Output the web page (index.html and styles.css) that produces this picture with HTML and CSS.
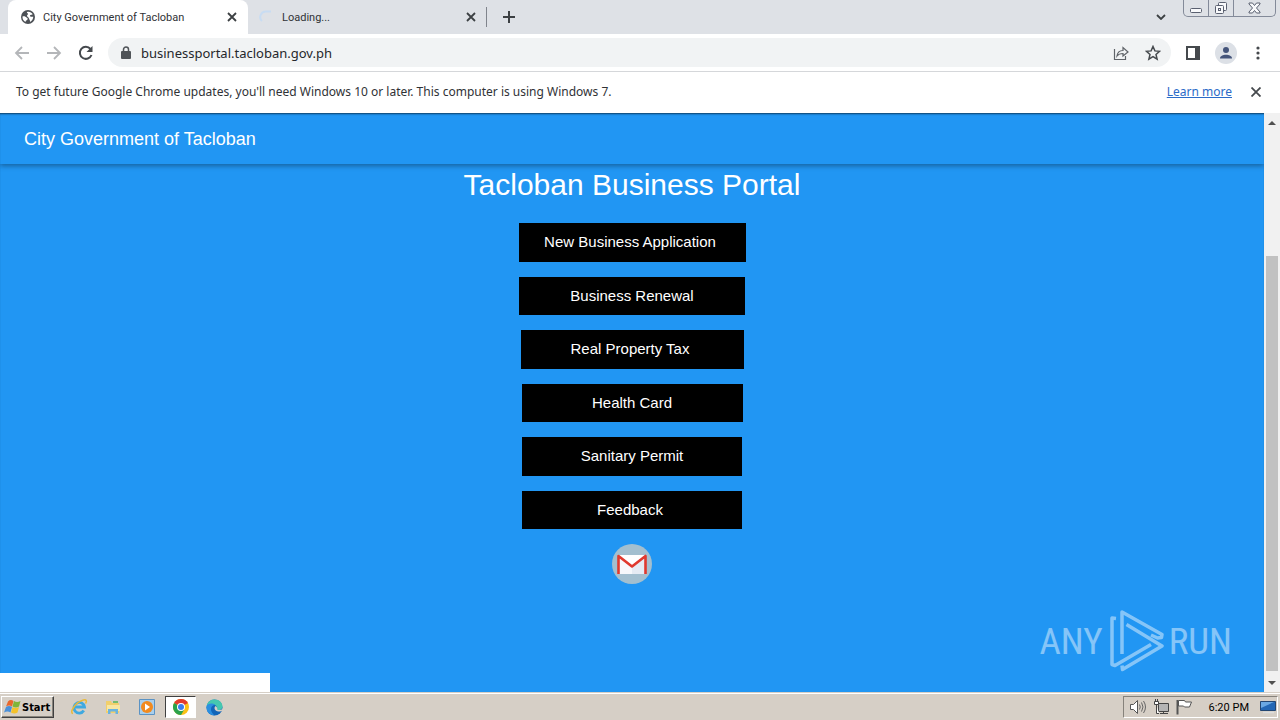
FILE: index.html
```html
<!DOCTYPE html>
<html lang="en">
<head>
<meta charset="utf-8">
<title>City Government of Tacloban</title>
<link rel="stylesheet" href="styles.css">
</head>
<body>
<div class="desktop">
  <header class="tabstrip">
    <div class="tab tab-active">
      <svg class="tab-icon" viewBox="0 0 16 16"><circle cx="8" cy="8" r="7" fill="#4d5156"/><path d="M2.500 7.500c2.500-.5 3 .5 4 1s1.500 1 1 2-2 .5-2 2.500C3.500 12 2.300 10 2.500 7.500zM7 3c2-.8 4.500 0 5.700 2.200-1 .8-2.200.3-2.700 1.300s1 1.500 3.300 1.300C13 10.500 12 12 10 13c.3-2-.8-2.200-1-3.500S7.500 8 7 7s1.500-1.500 1-2.300S6.500 4 7 3z" fill="#fff"/></svg>
      <span class="tab-title">City Government of Tacloban</span>
      <button class="icon-btn tab-close" aria-label="Close tab"><svg width="10" height="10" viewBox="0 0 10 10"><path d="M1 1l8 8M9 1l-8 8" stroke="#3c4043" stroke-width="1.800"/></svg></button>
    </div>
    <div class="tab tab-idle">
      <svg class="tab-icon" viewBox="0 0 16 16"><path d="M13 2.500H8A5.500 5.500 0 0 0 4 12" fill="none" stroke="#c8dcf2" stroke-width="2"/></svg>
      <span class="tab-title">Loading...</span>
      <button class="icon-btn tab-close" aria-label="Close tab"><svg width="10" height="10" viewBox="0 0 10 10"><path d="M1 1l8 8M9 1l-8 8" stroke="#3c4043" stroke-width="1.800"/></svg></button>
    </div>
    <span class="tab-divider"></span>
    <button class="icon-btn new-tab" aria-label="New tab"><svg width="12" height="12" viewBox="0 0 12 12"><path d="M6 0v12M0 6h12" stroke="#3c4043" stroke-width="2"/></svg></button>
    <button class="icon-btn tab-search" aria-label="Search tabs"><svg width="10" height="6" viewBox="0 0 10 6"><path d="M1 1l4 4 4-4" fill="none" stroke="#3c4043" stroke-width="1.800"/></svg></button>
    <div class="window-controls">
      <button class="icon-btn win-min" aria-label="Minimize"><svg width="12" height="5" viewBox="0 0 12 5"><rect x=".5" y=".5" width="11" height="4" rx="1" fill="#f8f9fb" stroke="#5a6070"/></svg></button>
      <button class="icon-btn win-restore" aria-label="Restore"><svg width="14" height="14" viewBox="0 0 14 14"><g fill="#f8f9fb" stroke="#5a6070"><rect x="4.500" y="1.500" width="8" height="8" rx="1"/><rect x="1.500" y="4.500" width="8" height="8" rx="1"/><rect x="4.500" y="7.500" width="2" height="2"/></g></svg></button>
      <button class="icon-btn win-close" aria-label="Close"><svg width="13" height="12" viewBox="0 0 13 12"><path d="M1 1h3.500l2 2.500L8.500 1H12v1L8.500 6l3.500 4v1H8.500l-2-2.500-2 2.500H1v-1l3.500-4L1 2z" fill="#f8f9fb" stroke="#5a6070"/></svg></button>
    </div>
  </header>

  <nav class="toolbar">
    <button class="icon-btn" aria-label="Back"><svg width="16" height="16" viewBox="0 0 16 16"><path d="M15 8H2M8 2L2 8l6 6" fill="none" stroke="#b4b6b9" stroke-width="1.800"/></svg></button>
    <button class="icon-btn" aria-label="Forward"><svg width="16" height="16" viewBox="0 0 16 16"><path d="M1 8h13M8 2l6 6-6 6" fill="none" stroke="#b4b6b9" stroke-width="1.800"/></svg></button>
    <button class="icon-btn" aria-label="Reload"><svg width="16" height="16" viewBox="0 0 16 16"><path d="M13.500 10A6 6 0 1 1 12.500 4" fill="none" stroke="#45494d" stroke-width="2"/><path d="M14.500 1v6h-6z" fill="#45494d"/></svg></button>
    <div class="omnibox">
      <svg width="10" height="14" viewBox="0 0 10 14"><rect x="0" y="5" width="10" height="8" rx="1" fill="#505458"/><path d="M2.500 6V3.500a2.500 2.500 0 0 1 5 0V6" fill="none" stroke="#505458" stroke-width="1.500"/></svg>
      <input class="url" type="text" aria-label="Address" value="businessportal.tacloban.gov.ph">
      <button class="icon-btn" aria-label="Share"><svg width="16" height="16" viewBox="0 0 16 16"><path d="M1.500 4v10.500h11V11M4 11c.5-4 2.500-5.500 6-5.500V2.500L15 7l-5 4V8.500c-2.500 0-4.500.5-6 2.500z" fill="none" stroke="#5f6368" stroke-width="1.200"/></svg></button>
      <button class="icon-btn" aria-label="Bookmark"><svg width="16" height="16" viewBox="0 0 16 16"><path d="M8 1.500l1.900 4.400 4.700.4-3.600 3.100 1.100 4.700L8 11.600l-4.100 2.500L5 9.400 1.400 6.300l4.700-.4z" fill="none" stroke="#45494d" stroke-width="1.500"/></svg></button>
    </div>
    <button class="icon-btn" aria-label="Side panel"><svg width="14" height="14" viewBox="0 0 14 14"><path d="M1 1h12v12H1z" fill="none" stroke="#45494d" stroke-width="2"/><path d="M9 1h4v12H9z" fill="#45494d"/></svg></button>
    <button class="icon-btn" aria-label="Profile"><svg width="22" height="22" viewBox="0 0 22 22"><circle cx="11" cy="11" r="11" fill="#dce0e6"/><circle cx="11" cy="8" r="3" fill="#44547a"/><path d="M5 16.500c0-5 12-5 12 0z" fill="#44547a"/></svg></button>
    <button class="icon-btn menu" aria-label="Menu"><svg width="4" height="14" viewBox="0 0 4 14"><g fill="#45494d"><circle cx="2" cy="2" r="1.600"/><circle cx="2" cy="7" r="1.600"/><circle cx="2" cy="12" r="1.600"/></g></svg></button>
  </nav>

  <div class="infobar">
    <span class="infobar-text">To get future Google Chrome updates, you'll need Windows 10 or later. This computer is using Windows 7.</span>
    <a class="infobar-link" href="#">Learn more</a>
    <button class="icon-btn" aria-label="Dismiss"><svg width="10" height="10" viewBox="0 0 10 10"><path d="M.5.5l9 9M9.500.5l-9 9" stroke="#45494d" stroke-width="1.800"/></svg></button>
  </div>

  <div class="viewport">
    <main class="page">
      <div class="appbar"><span>City Government of Tacloban</span></div>
      <h1 class="title">Tacloban Business Portal</h1>
      <div class="actions">
        <button class="action action-new">New Business Application</button>
        <button class="action action-renewal">Business Renewal</button>
        <button class="action action-tax">Real Property Tax</button>
        <button class="action action-health">Health Card</button>
        <button class="action action-permit">Sanitary Permit</button>
        <button class="action action-feedback">Feedback</button>
      </div>
      <a class="gmail" href="#" aria-label="Gmail"><svg width="40" height="40" viewBox="0 0 40 40"><circle cx="20" cy="20" r="20" fill="#a3bfcf"/><path d="M6 11h28v19H6z" fill="#f7f8fb"/><path d="M20 22l14-11v19H20z" fill="#e6ebf3"/><path d="M6 11l14 11 14-11z" fill="#fff"/><path d="M6.500 30V12L20 22.500 33.500 12v18" fill="none" stroke="#e0392e" stroke-width="2.600" stroke-linejoin="round"/></svg></a>
      <div class="status-bubble"></div>
      <div class="watermark">
        <span>ANY</span>
        <svg width="56" height="62" viewBox="0 0 56 62"><path d="M8 8.500L4 8v46.500l3 1L43 34.500M14 44V2l40 22.500-.5 3-4 .5L43 25M18.500 14.500L54 36 14.500 59.500 14 55.500" fill="none" stroke="#fff" stroke-width="3.500" stroke-linejoin="round"/></svg>
        <span>RUN</span>
      </div>
    </main>
    <div class="scrollbar">
      <svg width="8" height="4" viewBox="0 0 8 4"><path d="M4 0l4 4H0z" fill="#505050"/></svg>
      <div class="thumb"></div>
      <svg width="8" height="4" viewBox="0 0 8 4"><path d="M4 4l4-4H0z" fill="#505050"/></svg>
    </div>
  </div>

  <footer class="taskbar">
    <button class="start"><svg width="17" height="16" viewBox="0 0 17 16"><path d="M4 2.500q2.500-2.500 5.500-.5L8 7.500q-3-2-6 0z" fill="#e8672c"/><path d="M10 2q3 2 6.500 0L15 7.500q-3 2-6.500 0z" fill="#7fb539"/><path d="M2 8q3-2 6 0l-1.500 5.500q-3-2-6.500 0z" fill="#4a90d9"/><path d="M8.500 8q3 2 6.500 0l-1.500 5.500q-3 2-6.500 0z" fill="#f4c22b"/></svg>Start</button>
    <div class="quick">
      <button class="icon-btn task" aria-label="Internet Explorer"><svg width="18" height="18" viewBox="0 0 18 18"><path d="M13.800 12.500a5.300 5.300 0 1 1 .7-3.500H5" fill="none" stroke="#3fa9e0" stroke-width="2.800"/><path d="M3 15.500C-1 15 5 5 12 2.500c5-2 5 1 3.500 3" fill="none" stroke="#e9b93a" stroke-width="1.500"/></svg></button>
      <button class="icon-btn task" aria-label="Explorer"><svg width="18" height="18" viewBox="0 0 18 18"><path d="M2 3h5l1 2h7v10H2z" fill="#f1cf6b"/><path d="M3 7h13v6H3z" fill="#f8e6a2"/><path d="M4 16v-5h10v5h-2.500v-2.500h-5V16z" fill="#6ab3df"/><path d="M9 3h5v2H9z" fill="#76bb70"/></svg></button>
      <button class="icon-btn task" aria-label="Media Player"><svg width="16" height="16" viewBox="0 0 16 16"><path d="M.5.5h15v15H.5z" fill="#a9cfec" stroke="#5b93c4"/><circle cx="8" cy="8" r="6" fill="#f28a1e"/><path d="M6 4.500l5 3.500-5 3.500z" fill="#fff"/></svg></button>
      <button class="icon-btn task task-active" aria-label="Chrome"><svg width="16" height="16" viewBox="0 0 16 16"><circle cx="8" cy="8" r="8" fill="#fbc116"/><path d="M8 8L1.070 4A8 8 0 0 1 14.930 4z" fill="#e33b2e"/><path d="M8 8L1.070 4A8 8 0 0 0 8 16l3-5z" fill="#2ba24c"/><circle cx="8" cy="8" r="4" fill="#fff"/><circle cx="8" cy="8" r="3" fill="#3b7ded"/></svg></button>
      <button class="icon-btn task" aria-label="Edge"><svg width="17" height="17" viewBox="0 0 17 17"><circle cx="8.500" cy="8.500" r="8" fill="#1265b8"/><path d="M.6 7C2 2 5 .5 8.500.5c5 0 8 3.500 8 7 0 3-3 4-5.500 3.500C12 8 10 5.500 7 5.500S1.500 6 .6 7z" fill="#45c8b0"/><path d="M.6 7C2.500 4 7 4 9 6c-3 0-5 3-3.500 6.500S9 16.300 9 16.500C3 16.500-.3 12 .6 7z" fill="#2b8fe0"/><path d="M9.500 7c-2 1.500-1 5 3 5.500 1.500.2 3-.3 3.500-.8l.8.500V10c-2 1.200-4 1.200-5.500.7.500-1.200-.3-3-1.800-3.700z" fill="#d6cfc6"/></svg></button>
    </div>
    <div class="tray">
      <svg width="18" height="16" viewBox="0 0 18 16"><path d="M1.500 5.500h3l4-4v13l-4-4h-3z" fill="#fff" stroke="#555"/><path d="M10.500 5.500q1.500 2.500 0 5M12.500 3.500q3 4.500 0 9M14.500 2q4 6 0 12" fill="none" stroke="#666"/></svg>
      <svg width="17" height="16" viewBox="0 0 17 16"><path d="M5.500 4.500h10v8h-10z" fill="#b4b4b4" stroke="#444"/><path d="M7 14.500h8M10.500 12v3" stroke="#444"/><path d="M1.500 2.500h4v3h-4zM3.500 6v8.500H6M2.500 0v2M4.500 0v2" fill="#fff" stroke="#444"/></svg>
      <svg width="17" height="16" viewBox="0 0 17 16"><path d="M1.500 1v14.500" stroke="#555" stroke-width="2"/><path d="M2.500 1.500h6l1 1.500h6l-2 5h-5l-1-1h-5z" fill="#fff" stroke="#555"/></svg>
      <time class="clock">6:20 PM</time>
      <svg width="16" height="14" viewBox="0 0 16 14"><path d="M.5 1.500h15v9H.5z" fill="#2367b5" stroke="#234672"/><path d="M1 2h13L1 8z" fill="#6aa8e3"/><path d="M3 12.500h11" stroke="#ddd" stroke-width="1.500"/></svg>
    </div>
  </footer>
</div>
</body>
</html>
```
FILE: styles.css
```css
* { box-sizing: border-box; }
body { margin: 0; font-family: "Noto Sans", "Open Sans", sans-serif; font-size: 12px; color: #303236; }
button { font: inherit; color: inherit; cursor: pointer; }
svg { display: block; flex: none; }
.desktop { display: flex; flex-direction: column; min-height: 100vh; }
.icon-btn { display: flex; align-items: center; justify-content: center; flex: none; padding: 0; border: 0; background: none; }

.tabstrip { display: flex; height: 34px; padding-left: 8px; background: #dee1e6; }
.tab { display: flex; align-items: center; width: 240px; padding: 0 11px 0 12px; }
.tab-active { background: #fff; border-radius: 8px 8px 0 0; }
.tab-icon { width: 16px; height: 16px; }
.tab-title { flex: 1; margin-left: 7px; font-family: Roboto, sans-serif; font-size: 11px; white-space: nowrap; }
.tab-idle { width: 238px; padding: 0 10px; }
.tab-idle .tab-title { margin-left: 8px; }
.tab-close { width: 10px; }
.tab-divider { width: 1px; height: 20px; margin-top: 7px; margin-right: 16px; background: #80848c; }
.tab-search { margin-left: auto; margin-right: 17px; }
.window-controls { display: flex; width: 93px; height: 17px; margin-right: 4px; border: 1px solid #838a99; border-top: 0; border-radius: 0 0 5px 5px; }
.win-min { width: 25px; border-right: 1px solid #838a99; padding-top: 5px; }
.win-restore { width: 25px; border-right: 1px solid #838a99; }
.win-close { flex: 1; }

.toolbar { display: flex; align-items: center; gap: 15px; height: 38px; padding: 0 20px 0 14px; background: #fff; border-bottom: 1px solid #d5d7da; }
.toolbar > .icon-btn:nth-child(-n+3) { margin-right: 1px; }
.omnibox { display: flex; align-items: center; flex: 1; gap: 16px; height: 29px; margin-left: -2px; padding: 0 10px 0 13px; border-radius: 15px; background: #f1f3f4; }
.url { flex: 1; min-width: 0; margin-left: -6px; padding: 0; border: 0; background: none; font: inherit; font-size: 13px; color: #25272b; }
.menu { margin-left: 4px; }

.infobar { display: flex; align-items: center; height: 41px; padding: 0 19px 1px 16px; background: #fff; line-height: 16px; }
.infobar-text { flex: 1; padding-bottom: 1px; }
.infobar-link { margin-right: 19px; padding-bottom: 1px; color: #2b6bc8; }

.viewport { display: flex; flex: 1; }
.page { position: relative; flex: 1; display: flex; flex-direction: column; align-items: center; overflow: hidden; background: #2196f3; font-family: "Liberation Sans", Arial, sans-serif; box-shadow: inset 0 2px 2px -1px rgba(0,0,0,.6); }
.appbar { align-self: stretch; display: flex; align-items: center; height: 51px; padding: 1px 24px 0; color: #fff; font-size: 18px; box-shadow: 0 2px 5px rgba(0,0,0,.35); }
.title { margin: 3px 0 0; line-height: 36px; font-size: 30px; font-weight: 400; color: #fff; }
.actions { display: flex; flex-direction: column; align-items: center; gap: 15px; margin-top: 20px; }
.action { width: 220px; height: 38px; padding: 0 0 2px; border: 0; background: #000; color: #fff; font-size: 15px; }
.action:nth-child(odd) { height: 39px; }
.action-new { width: 227px; padding-right: 4px; }
.action-renewal { width: 226px; }
.action-tax { width: 223px; padding-right: 4px; }
.action-health { width: 221px; }
.action-feedback { padding-right: 4px; }
.gmail { margin-top: 15px; }
.status-bubble { position: absolute; left: 0; bottom: 0; width: 270px; height: 19px; background: #fff; }
.watermark { position: absolute; right: 32px; bottom: 20px; display: flex; align-items: center; gap: 5px; opacity: .45; color: #fff; font-family: "Roboto Condensed", "DejaVu Sans Condensed", sans-serif; font-size: 37px; font-weight: 400; }
.scrollbar { display: flex; flex-direction: column; align-items: center; width: 16px; padding: 8px 2px 7px; background: #f1f1f1; }
.thumb { width: 12px; flex: 1; margin: 131px 0 10px; background: #c1c1c1; }

.taskbar { display: flex; align-items: center; height: 28px; padding: 2px 0 1px 1px; background: #d6cfc6; border-top: 1px solid #d6cfc6; box-shadow: inset 0 1px #fff; font-family: "DejaVu Sans Condensed", "DejaVu Sans", sans-serif; color: #000; }
.start { display: flex; align-items: center; gap: 1px; width: 53px; height: 22px; padding: 0 2px; border: 1px solid; border-color: #fff #404040 #404040 #fff; box-shadow: inset -1px -1px #88847c; background: #d6cfc6; font-size: 11px; font-weight: 700; }
.quick { display: flex; margin-left: 8px; }
.task { width: 34px; height: 22px; }
.task-active { width: 31px; margin: 0 1px; background: #fff; border: 1px solid; border-color: #404040 #fff #fff #404040; }
.tray { display: flex; align-items: center; gap: 6px; height: 22px; margin-left: auto; margin-right: 2px; padding: 0 1px 0 5px; border: 1px solid; border-color: #86827b #fff #fff #86827b; }
.clock { margin: 0 5px 0 10px; font-family: Roboto, sans-serif; font-size: 11px; }
```
